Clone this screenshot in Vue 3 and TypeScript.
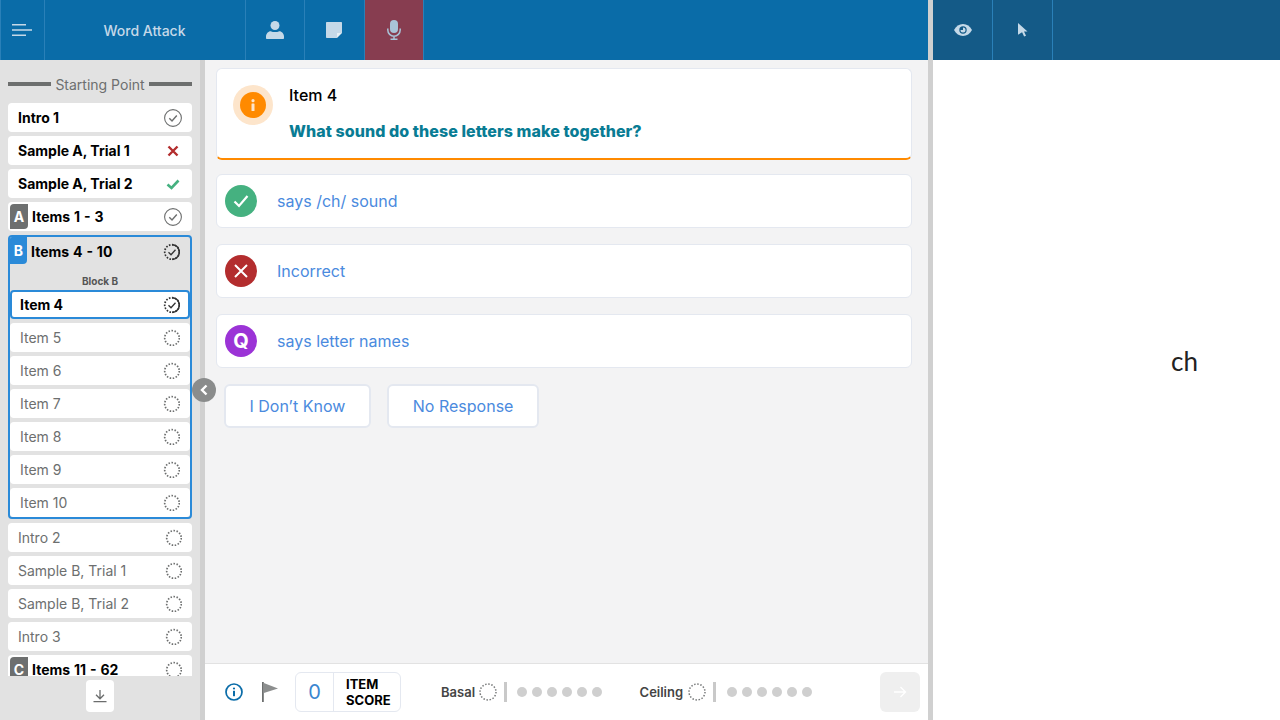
<template>
  <div class="app">
    <div class="left-pane">
      <header class="topbar">
        <button class="tb-btn menu-btn">
          <svg width="20" height="12" viewBox="0 0 20 12"><path d="M0 .8h14M0 6h20M0 11.200h14" stroke="#c5d9e8" stroke-width="1.600" fill="none" /></svg>
        </button>
        <div class="tb-title">Word Attack</div>
        <button class="tb-btn icon-btn person-btn">
          <svg width="18" height="18" viewBox="0 0 18 18" fill="#c5d9e8"><circle cx="9" cy="4.500" r="4.500" /><path d="M1 18c-.6 0-1-.4-1-1v-1.500C0 12.700 2.200 10.200 4.700 10.200c1.300.6 2.700.9 4.300.9s3-.3 4.300-.9c2.500 0 4.700 2.500 4.700 5.300V17c0 .6-.4 1-1 1z" /></svg>
        </button>
        <button class="tb-btn icon-btn note-btn">
          <svg width="16" height="16" viewBox="0 0 16 16"><path d="M0 1c0-.6.4-1 1-1h14c.6 0 1 .4 1 1v10l-5 5H1c-.6 0-1-.4-1-1z" fill="#c5d9e8" /><path d="M11 11h4.500L11 15.500z" fill="#e8f0f6" /></svg>
        </button>
        <button class="tb-btn icon-btn mic-btn">
          <svg width="14" height="20" viewBox="0 0 14 20"><rect x="3" y="0" width="8" height="13" rx="4" fill="#a9c3d8" /><path d="M.8 8.500v1.500a6.200 6.200 0 0 0 12.400 0V8.500M7 16.200v2.800M3.500 19.200h7" stroke="#a9c3d8" stroke-width="1.500" fill="none" /></svg>
        </button>
      </header>

      <div class="body">
        <aside class="sidebar">
          <div class="side-scroll">
            <div class="start-head"><span class="line"></span><span>Starting Point</span><span class="line"></span></div>

            <div v-for="row in topRows" :key="row.label" class="row bold" :class="{ grouped: !!row.badge }">
              <span v-if="row.badge" class="badge">{{ row.badge }}</span>
              <span class="row-label">{{ row.label }}</span>
              <StatusIcon :status="row.status" />
            </div>

            <section class="block">
              <div class="block-head">
                <span class="badge blue">B</span>
                <span class="row-label">Items 4 - 10</span>
                <StatusIcon status="progress" />
              </div>
              <div class="block-name">Block B</div>
              <div v-for="item in blockItems" :key="item" class="row inner" :class="{ current: item === 'Item 4', bold: item === 'Item 4' }">
                <span class="row-label">{{ item }}</span>
                <StatusIcon :status="item === 'Item 4' ? 'progress' : 'todo'" />
              </div>
            </section>

            <div v-for="row in bottomRows" :key="row.label" class="row" :class="{ bold: !!row.badge, grouped: !!row.badge }">
              <span v-if="row.badge" class="badge">{{ row.badge }}</span>
              <span class="row-label">{{ row.label }}</span>
              <StatusIcon status="todo" />
            </div>
          </div>
          <div class="side-foot">
            <button class="dl-btn">
              <svg width="14" height="14" viewBox="0 0 14 14"><path d="M7 1v8.500M3 5.800l4 4 4-4M.5 12.700h13" stroke="#6b6d6d" stroke-width="1.300" fill="none" /></svg>
            </button>
          </div>
        </aside>

        <div class="divider">
          <button class="collapse">
            <svg width="10" height="12" viewBox="0 0 10 12"><path d="M7.500 1.500 3 6l4.500 4.500" stroke="#fff" stroke-width="2.400" fill="none" /></svg>
          </button>
        </div>

        <main class="main">
          <div class="content">
            <div class="prompt-card">
              <div class="info-halo">
                <div class="info-dot">
                  <svg width="4" height="12" viewBox="0 0 4 12" fill="#fde5cb"><circle cx="2" cy="1.700" r="1.600" /><rect x=".5" y="4.500" width="3" height="7.500" rx=".6" /></svg>
                </div>
              </div>
              <div class="prompt-text">
                <div class="prompt-title">Item 4</div>
                <div class="prompt-q">What sound do these letters make together?</div>
              </div>
            </div>

            <div class="answer">
              <span class="ans-icon green">
                <svg width="16" height="14" viewBox="0 0 16 14"><path d="M1.500 7.500 6 12 14.500 2" stroke="#fff" stroke-width="2.200" fill="none" /></svg>
              </span>
              <span>says /ch/ sound</span>
            </div>
            <div class="answer">
              <span class="ans-icon red">
                <svg width="14" height="14" viewBox="0 0 14 14"><path d="M1 1l12 12M13 1 1 13" stroke="#fff" stroke-width="2" fill="none" /></svg>
              </span>
              <span>Incorrect</span>
            </div>
            <div class="answer">
              <span class="ans-icon purple q">Q</span>
              <span>says letter names</span>
            </div>

            <div class="extra-btns">
              <button class="extra">I Don’t Know</button>
              <button class="extra">No Response</button>
            </div>
          </div>

          <footer class="bottombar">
            <svg class="info-ic" width="18" height="18" viewBox="0 0 18 18"><circle cx="9" cy="9" r="8" stroke="#0a6ca8" stroke-width="1.700" fill="none" /><circle cx="9" cy="5.500" r="1.100" fill="#0a6ca8" /><rect x="8" y="7.800" width="2" height="5.400" fill="#0a6ca8" /></svg>
            <svg class="flag-ic" width="16" height="20" viewBox="0 0 16 20"><path d="M0 0h1.800v20H0z" fill="#6d6f6f" /><path d="M1.800 1 16 6.500 1.800 11z" fill="#8c8e8e" /></svg>
            <div class="score-box">
              <span class="score-num">0</span>
              <span class="score-label">ITEM<br />SCORE</span>
            </div>
            <div class="rule-group basal">
              <span class="rule-label">Basal</span>
              <svg class="dot-ring" width="18" height="18" viewBox="0 0 18 18"><circle cx="9" cy="9" r="8" fill="none" stroke="#77797a" stroke-width="1.500" stroke-dasharray="1.500 1.640" /></svg>
              <span class="rule-bar"></span>
              <span class="dots"><i v-for="n in 6" :key="n"></i></span>
            </div>
            <div class="rule-group ceiling">
              <span class="rule-label">Ceiling</span>
              <svg class="dot-ring" width="18" height="18" viewBox="0 0 18 18"><circle cx="9" cy="9" r="8" fill="none" stroke="#77797a" stroke-width="1.500" stroke-dasharray="1.500 1.640" /></svg>
              <span class="rule-bar"></span>
              <span class="dots"><i v-for="n in 6" :key="n"></i></span>
            </div>
            <button class="next-btn">
              <svg width="14" height="12" viewBox="0 0 14 12"><path d="M1 6h11.500M7.500 1l5 5-5 5" stroke="#fff" stroke-width="1.300" fill="none" /></svg>
            </button>
          </footer>
        </main>
      </div>
    </div>

    <div class="pane-gap"></div>

    <div class="right-pane">
      <header class="topbar dark">
        <button class="tb-btn icon-btn">
          <svg width="18" height="12" viewBox="0 0 18 12"><path d="M0 6c2-3.800 5.200-6 9-6s7 2.200 9 6c-2 3.800-5.200 6-9 6s-7-2.200-9-6z" fill="#c5d9e8" /><circle cx="9" cy="6" r="3.700" fill="#145a87" /><path d="M9 3.500A2.500 2.500 0 1 1 6.500 6H9z" fill="#c5d9e8" /></svg>
        </button>
        <button class="tb-btn icon-btn">
          <svg width="10" height="14" viewBox="0 0 10 14"><path d="M0 0l9.500 8.500H6l2 4.200-1.900.9-2-4.300L0 11.800z" fill="#c5d9e8" /></svg>
        </button>
      </header>
      <div class="stimulus">ch</div>
    </div>
  </div>
</template>

<script setup lang="ts">
import { defineComponent, h } from 'vue'

type Status = 'done' | 'wrong' | 'right' | 'progress' | 'todo'

interface Row {
  label: string
  status: Status
  badge?: string
}

const topRows: Row[] = [
  { label: 'Intro 1', status: 'done' },
  { label: 'Sample A, Trial 1', status: 'wrong' },
  { label: 'Sample A, Trial 2', status: 'right' },
  { label: 'Items 1 - 3', status: 'done', badge: 'A' }
]

const blockItems = ['Item 4', 'Item 5', 'Item 6', 'Item 7', 'Item 8', 'Item 9', 'Item 10']

const bottomRows: { label: string; badge?: string }[] = [
  { label: 'Intro 2' },
  { label: 'Sample B, Trial 1' },
  { label: 'Sample B, Trial 2' },
  { label: 'Intro 3' },
  { label: 'Items 11 - 62', badge: 'C' }
]

const StatusIcon = defineComponent({
  props: { status: { type: String, required: true } },
  setup(props) {
    return () => {
      const kids = []
      if (props.status === 'done') {
        kids.push(h('circle', { cx: 9, cy: 9, r: 8.400, fill: 'none', stroke: '#6d6f6f', 'stroke-width': 1.100 }))
        kids.push(h('path', { d: 'M5.300 9.300 8 12 12.800 6.500', fill: 'none', stroke: '#6d6f6f', 'stroke-width': 1.400 }))
      } else if (props.status === 'wrong') {
        kids.push(h('path', { d: 'M4.500 4.500l9 9M13.500 4.500l-9 9', fill: 'none', stroke: '#b32d2e', 'stroke-width': 2.400 }))
      } else if (props.status === 'right') {
        kids.push(h('path', { d: 'M3.500 9.500 7.500 13 14.500 5.500', fill: 'none', stroke: '#45b180', 'stroke-width': 2.600 }))
      } else if (props.status === 'progress') {
        kids.push(h('circle', { cx: 10, cy: 9, r: 7.300, fill: 'none', stroke: '#333', 'stroke-width': 1.700, 'stroke-dasharray': '1.600 1.500' }))
        kids.push(h('path', { d: 'M10 1.700A7.300 7.300 0 0 1 10 16.300', fill: 'none', stroke: '#333', 'stroke-width': 1.500 }))
        kids.push(h('path', { d: 'M6.500 9.300 9 11.800 13.500 6.800', fill: 'none', stroke: '#333', 'stroke-width': 1.300 }))
      } else {
        kids.push(h('circle', { cx: 10, cy: 9, r: 7.300, fill: 'none', stroke: '#6d6f6f', 'stroke-width': 1.700, 'stroke-dasharray': '1.500 1.560' }))
      }
      return h('svg', { class: 'status', width: 18, height: 18, viewBox: '0 0 18 18' }, kids)
    }
  }
})
</script>

<style>
html, body {
  margin: 0;
  padding: 0;
  background: #fff;
}
</style>

<style scoped>
.app {
  display: flex;
  width: 1280px;
  height: 720px;
  overflow: hidden;
  font-family: Inter, "Liberation Sans", sans-serif;
  color: #000;
}

button {
  font-family: inherit;
  border: none;
  padding: 0;
  background: none;
}

.left-pane {
  width: 928px;
  display: flex;
  flex-direction: column;
}

.pane-gap {
  width: 5px;
  background: #d0d0d0;
}

.right-pane {
  flex: 1;
  display: flex;
  flex-direction: column;
}

.topbar {
  height: 60px;
  flex: none;
  display: flex;
  background: #0a6ca8;
}

.topbar.dark {
  background: #145a87;
}

.tb-btn {
  height: 60px;
  display: flex;
  align-items: center;
  justify-content: center;
  border-right: 1px solid #2a80b8;
}

.menu-btn {
  width: 45px;
  padding-right: 2px;
  box-sizing: border-box;
  border-left: 1px solid #2a80b8;
}

.tb-title {
  width: 201px;
  box-sizing: border-box;
  border-right: 1px solid #2a80b8;
  padding-right: 1px;
  padding-top: 1px;
  display: flex;
  align-items: center;
  justify-content: center;
  font-size: 14px;
  font-weight: 500;
  color: #c5d9e8;
}

.icon-btn {
  width: 60px;
  box-sizing: border-box;
}

.person-btn {
  width: 59px;
}

.note-btn {
  padding-right: 1px;
}

.mic-btn {
  background: #873d50;
  width: 59px;
}

.body {
  flex: 1;
  display: flex;
  min-height: 0;
}

.sidebar {
  width: 200px;
  flex: none;
  display: flex;
  flex-direction: column;
  background: #e2e2e2;
}

.side-scroll {
  height: 616px;
  padding: 15px 8px 0;
  box-sizing: border-box;
  overflow: hidden;
  flex: none;
}

.start-head {
  display: flex;
  align-items: center;
  gap: 4px;
  height: 18px;
  margin-bottom: 10px;
  font-size: 14px;
  color: #6d6f6f;
  white-space: nowrap;
}

.line {
  flex: 1;
  height: 4px;
  background: #6d6f6e;
}

.row {
  height: 29px;
  margin-bottom: 4px;
  padding: 0 10px;
  box-sizing: border-box;
  display: flex;
  align-items: center;
  background: #fff;
  border-radius: 4px;
  font-size: 14px;
  color: #6d6f6f;
}

.row.bold {
  font-weight: 700;
  color: #000;
}

.row.grouped {
  word-spacing: .6px;
}

.row-label {
  flex: 1;
  white-space: nowrap;
}

.status {
  flex: none;
}

.badge {
  width: 18px;
  height: 25px;
  margin: 0 4px 0 -8px;
  flex: none;
  display: flex;
  align-items: center;
  justify-content: center;
  background: #6d6f6f;
  color: #fff;
  border-radius: 4px 0 4px 0;
  font-size: 14px;
  font-weight: 700;
}

.badge.blue {
  background: #2a8ad8;
  align-self: flex-start;
  height: 27px;
  width: 17px;
  margin: 0 4px 0 0;
  border-radius: 0 0 4px 0;
}

.block {
  border: 2px solid #2a8ad8;
  border-radius: 4px;
  height: 284px;
  box-sizing: border-box;
  margin-bottom: 4px;
  overflow: hidden;
}

.block-head {
  display: flex;
  align-items: flex-start;
  height: 28px;
  font-size: 14px;
  font-weight: 700;
  word-spacing: .6px;
  padding-right: 10px;
}

.block-head .row-label {
  line-height: 30px;
}

.block-head .status {
  margin-top: 6px;
}

.block-name {
  height: 25px;
  box-sizing: border-box;
  padding-top: 10px;
  font-size: 10px;
  font-weight: 700;
  color: #555;
  text-align: center;
  line-height: 12px;
}

.row.current {
  border: 2px solid #2a8ad8;
  padding: 0 8px;
}

.side-foot {
  flex: 1;
  display: flex;
  justify-content: center;
  padding-top: 4px;
}

.dl-btn {
  width: 28px;
  height: 32px;
  display: flex;
  align-items: center;
  justify-content: center;
  background: #fff;
  border-radius: 4px;
}

.divider {
  width: 5px;
  flex: none;
  background: #d0d0d0;
  position: relative;
}

.collapse {
  position: absolute;
  left: -8px;
  top: 318px;
  width: 24px;
  height: 24px;
  border-radius: 50%;
  background: #8a8c8c;
  display: flex;
  align-items: center;
  justify-content: center;
}

.main {
  flex: 1;
  display: flex;
  flex-direction: column;
  min-width: 0;
  background: #f3f3f4;
}

.content {
  flex: 1;
  padding: 8px 16px 0 11px;
}

.prompt-card {
  height: 92px;
  box-sizing: border-box;
  display: flex;
  padding: 16px 16px 0 16px;
  background: #fff;
  border: 1px solid #e4e8f0;
  border-bottom: 2px solid #ff8a00;
  border-radius: 6px;
  margin-bottom: 14px;
}

.info-halo {
  width: 40px;
  height: 40px;
  border-radius: 50%;
  background: #fde5cb;
  display: flex;
  align-items: center;
  justify-content: center;
  flex: none;
}

.info-dot {
  width: 26px;
  height: 26px;
  border-radius: 50%;
  background: #ff8a00;
  display: flex;
  align-items: center;
  justify-content: center;
}

.prompt-text {
  margin-left: 16px;
}

.prompt-title {
  font-size: 16px;
  font-weight: 500;
  line-height: 20px;
}

.prompt-q {
  margin-top: 16px;
  font-size: 16px;
  font-weight: 800;
  letter-spacing: .07px;
  line-height: 20px;
  color: #097c94;
}

.answer {
  height: 54px;
  box-sizing: border-box;
  display: flex;
  align-items: center;
  padding-left: 8px;
  gap: 20px;
  margin-bottom: 16px;
  background: #fff;
  border: 1px solid #e4e8f0;
  border-radius: 6px;
  font-size: 16px;
  color: #4a8ade;
}

.ans-icon {
  width: 32px;
  height: 32px;
  border-radius: 50%;
  display: flex;
  align-items: center;
  justify-content: center;
  color: #fff;
}

.green {
  background: #45b180;
}

.red {
  background: #b32d2e;
}

.purple {
  background: #9b33d6;
}

.q {
  font-size: 20px;
  font-weight: 700;
}

.extra-btns {
  display: flex;
  gap: 16px;
  padding-left: 8px;
}

.extra {
  height: 44px;
  padding: 0 23.500px;
  background: #fff;
  border: 2px solid #e4e8f0;
  border-radius: 6px;
  font-size: 16px;
  color: #4a8ade;
}

.extra:last-child {
  padding: 0 24px;
}

.bottombar {
  height: 57px;
  flex: none;
  box-sizing: border-box;
  display: flex;
  align-items: center;
  background: #fff;
  border-top: 1px solid #e2e2e2;
  padding-left: 20px;
}

.flag-ic {
  margin-left: 19px;
}

.score-box {
  margin-left: 17px;
  width: 106px;
  height: 40px;
  box-sizing: border-box;
  display: flex;
  align-items: stretch;
  border: 1px solid #e4e8f0;
  border-radius: 6px;
}

.score-num {
  width: 37px;
  flex: none;
  display: flex;
  align-items: center;
  justify-content: center;
  border-right: 1px solid #e4e8f0;
  font-size: 20px;
  color: #3a86d0;
}

.score-label {
  padding-left: 12px;
  font-size: 13px;
  font-weight: 700;
  line-height: 16px;
  align-self: center;
}

.rule-group {
  display: flex;
  align-items: center;
}

.basal {
  margin-left: 40px;
}

.ceiling {
  margin-left: 37.500px;
}

.rule-label {
  font-size: 13px;
  font-weight: 600;
  color: #444;
}

.dot-ring {
  margin-left: 4px;
  flex: none;
}

.ceiling .dot-ring {
  margin-left: 4.500px;
}

.rule-bar {
  width: 3px;
  height: 20px;
  margin: 0 10.500px 0 6.500px;
  background: #c9c9c9;
}

.ceiling .rule-bar {
  margin: 0 11px 0 7px;
}

.dots {
  display: flex;
  gap: 5px;
}

.dots i {
  display: block;
  width: 10px;
  height: 10px;
  border-radius: 50%;
  background: #cfcfcf;
}

.next-btn {
  margin-left: auto;
  margin-right: 8px;
  width: 40px;
  height: 40px;
  display: flex;
  align-items: center;
  justify-content: center;
  background: #efefef;
  border-radius: 6px;
}

.stimulus {
  flex: 1;
  display: flex;
  align-items: center;
  justify-content: center;
  font-family: Lato, sans-serif;
  font-size: 26px;
  color: #222;
  padding-left: 156px;
  padding-bottom: 58px;
  box-sizing: border-box;
}
</style>
